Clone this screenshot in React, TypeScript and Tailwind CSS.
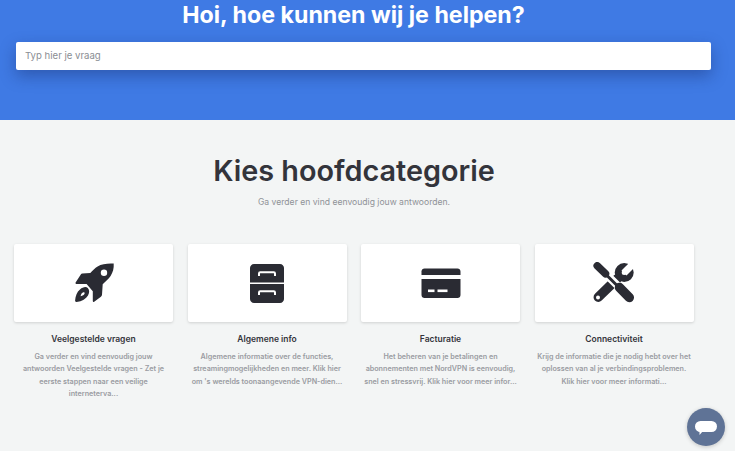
import React from 'react'

const RocketIcon = () => (
  <svg viewBox="0 0 42 42" className="w-[42px] h-[42px]" fill="#2a2b33">
    <path d="M40.7 1.6C34.5 1.3 28.8 1.9 24.6 4.4C22 6 19.5 8.6 17.3 10.9L9.4 11.4C8.7 11.5 8.1 11.9 7.8 12.5L2.6 20.6C2.3 21.2 2.6 21.9 3.4 21.9L13.6 22.1L19.8 29.2V39C19.8 39.9 20.6 40.2 21.2 39.7L27.9 34.8C28.6 34.3 29 33.6 29 32.8L29.7 22.2C32.4 19.8 35.5 17 37.6 14C40 10.4 41 6.4 40.7 1.6Z" />
    <circle cx="31" cy="10.7" r="3.2" fill="#fff" />
    <path fillRule="evenodd" d="M14.8 26C16.4 27.8 16.7 30.6 15 33.4C13 36.7 9.2 39.2 3.6 39.9C2.6 40 2 39.5 2.1 38.6C2.5 33.6 3.9 29.9 7 27.4C9.8 25.1 12.9 24.2 14.8 26ZM10.4 30.3C9 30.6 8 32 7.6 34.3C9.6 34 11.2 33 11.6 31.6C11.9 30.7 11.3 30.1 10.4 30.3Z" />
  </svg>
)

const DrawerIcon = () => (
  <svg viewBox="0 0 34 39" className="w-[34px] h-[39px]" fill="#2a2b33">
    <path d="M4 0H30C32.2 0 34 1.8 34 4V18.6H0V4C0 1.8 1.8 0 4 0Z" />
    <path d="M0 20H34V35C34 37.2 32.2 39 30 39H4C1.8 39 0 37.2 0 35V20Z" />
    <path d="M9 12V9.5C9 8.8 9.6 8.3 10.2 8.3H23.8C24.4 8.3 25 8.8 25 9.5V12" fill="none" stroke="#fff" strokeWidth="2" />
    <path d="M9 31V28.5C9 27.8 9.6 27.3 10.2 27.3H23.8C24.4 27.3 25 27.8 25 28.5V31" fill="none" stroke="#fff" strokeWidth="2" />
  </svg>
)

const CardIcon = () => (
  <svg viewBox="0 0 40 31" className="w-[40px] h-[31px]" fill="#2a2b33">
    <path d="M3.5 0.5H36.5C38.2 0.5 39.5 1.8 39.5 3.5V7H0.5V3.5C0.5 1.8 1.8 0.5 3.5 0.5Z" />
    <path d="M0.5 11H39.5V27C39.5 28.9 38.2 30 36.5 30H3.5C1.8 30 0.5 28.9 0.5 27V11Z" />
    <rect x="7" y="21.5" width="6.5" height="2.6" fill="#fff" />
    <rect x="16.5" y="21.5" width="10" height="2.6" fill="#fff" />
  </svg>
)

const ToolsIcon = () => (
  <svg viewBox="0 0 42 42" className="w-[42px] h-[42px]" fill="none">
    <circle cx="31.2" cy="10.6" r="6" stroke="#2a2b33" strokeWidth="7" />
    <path d="M31 11L42 0" stroke="#fff" strokeWidth="7" />
    <path d="M5.3 35.2L24 17" stroke="#2a2b33" strokeWidth="9.5" strokeLinecap="round" />
    <circle cx="5" cy="35.5" r="2" fill="#fff" />
    <path d="M3.5 3.2L14 13.2L27 26" stroke="#fff" strokeWidth="8" />
    <path d="M4.2 3.8L12.5 11.8" stroke="#2a2b33" strokeWidth="7.5" strokeLinecap="round" />
    <path d="M12 11.5L24 23.5" stroke="#2a2b33" strokeWidth="3" />
    <path d="M26.5 25.5L36.3 35.5" stroke="#2a2b33" strokeWidth="9.5" strokeLinecap="round" />
  </svg>
)

const CATEGORIES = [
  {
    title: 'Veelgestelde vragen',
    icon: RocketIcon,
    text: 'Ga verder en vind eenvoudig jouw\nantwoorden Veelgestelde vragen - Zet je\neerste stappen naar een veilige\ninterneterva...',
  },
  {
    title: 'Algemene info',
    icon: DrawerIcon,
    text: 'Algemene informatie over de functies,\nstreamingmogelijkheden en meer. Klik hier\nom \'s werelds toonaangevende VPN-dien...',
  },
  {
    title: 'Facturatie',
    icon: CardIcon,
    text: 'Het beheren van je betalingen en\nabonnementen met NordVPN is eenvoudig,\nsnel en stressvrij. Klik hier voor meer infor...',
  },
  {
    title: 'Connectiviteit',
    icon: ToolsIcon,
    text: 'Krijg de informatie die je nodig hebt over het\noplossen van al je verbindingsproblemen.\nKlik hier voor meer informati...',
  },
]

export default function App() {
  return (
    <div className="h-[451px] overflow-hidden relative bg-[#f3f5f5] font-['Inter',sans-serif]">
      {/* Hero */}
      <header className="h-[120px] bg-[#3f7ae4] pl-4 pr-6">
        <h1 className="w-[675px] text-center text-white text-[23.2px] leading-[30px] font-bold">
          Hoi, hoe kunnen wij je helpen?
        </h1>
        <div className="mt-[12px] h-[28px] bg-white rounded-[2px] flex items-center pl-[9px] pt-[1px] text-[9.6px] text-[#8a8d93] shadow-[0_6px_16px_rgba(20,40,100,0.4)]">
          Typ hier je vraag
        </div>
      </header>

      {/* Categories */}
      <main className="w-[708px] text-center">
        <h2 className="mt-[31px] text-[28.8px] leading-[40px] font-semibold text-[#33343b]">Kies hoofdcategorie</h2>
        <p className="mt-[5px] text-[8.6px] leading-[12px] text-[#8f9297]">Ga verder en vind eenvoudig jouw antwoorden.</p>
        <div className="mt-[36px] ml-[14px] flex gap-[14.5px]">
          {CATEGORIES.map((item) => {
            const Icon = item.icon
            return (
              <div key={item.title} className="w-[159px]">
                <div className="h-[78px] bg-white rounded-[2px] flex items-center justify-center shadow-[0_1px_3px_rgba(0,0,0,0.15)]">
                  <Icon />
                </div>
                <h3 className="mt-[11px] text-[8.5px] leading-[12px] font-semibold text-[#33343b]">{item.title}</h3>
                <p className="mt-[6px] whitespace-pre-line text-[7.2px] leading-[12.3px] font-semibold text-[#9a9ca2]">{item.text}</p>
              </div>
            )
          })}
        </div>
      </main>

      {/* Chat button */}
      <button className="absolute left-[687px] top-[408px] w-[38px] h-[38px] rounded-full bg-[#5f7396] flex items-center justify-center pt-[4px] shadow-[0_1px_4px_rgba(0,0,0,0.2)]">
        <svg viewBox="0 0 22 16" className="w-[22px] h-[16px]" fill="#fff">
          <rect x="0" y="0" width="22" height="11" rx="5.5" />
          <path d="M4.5 10H8L4.5 14Z" />
        </svg>
      </button>
    </div>
  )
}
